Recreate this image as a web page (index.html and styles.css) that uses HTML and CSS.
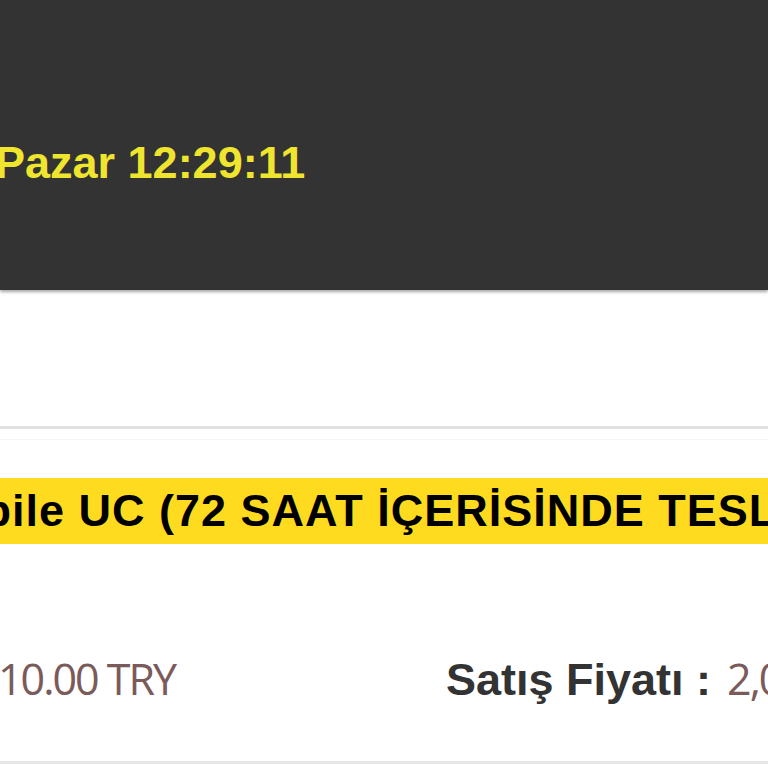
FILE: index.html
```html
<!DOCTYPE html>
<html lang="tr">
<head>
<meta charset="utf-8">
<title>Ürün</title>
<link rel="stylesheet" href="styles.css">
</head>
<body>
<header class="topbar">
  <div class="clock">Pazar 12:29:11</div>
</header>
<main class="content">
  <section class="product">
    <h1 class="product-title"><span class="product-title-text">PUBG Mobile UC (72 SAAT İÇERİSİNDE TESLİM)</span></h1>
    <div class="prices">
      <div class="price-cell price-list"><span class="price-value">10.00 TRY</span></div>
      <div class="price-cell price-sale"><span class="price-label">Satış Fiyatı :</span><span class="price-value price-sale-value">2,010.00 TRY</span></div>
    </div>
  </section>
</main>
</body>
</html>
```
FILE: styles.css
```css
html, body {
  margin: 0;
  padding: 0;
}

body {
  width: 768px;
  height: 768px;
  overflow: hidden;
  background: #fff;
  font-family: "Liberation Sans", Arial, sans-serif;
}

.topbar {
  height: 290px;
  background: #333;
  box-shadow: 0 2px 3px rgba(0, 0, 0, 0.35);
  box-sizing: border-box;
  padding-top: 137px;
  position: relative;
  z-index: 1;
}

.clock {
  margin-left: -5px;
  font-size: 45px;
  line-height: 52px;
  font-weight: bold;
  color: #efe52e;
  white-space: nowrap;
}

.content {
  padding-top: 136px;
}

.product {
  border-top: 3px solid #e1e1e1;
  border-bottom: 3px solid #e6e6e6;
}

.product-title {
  margin: 10px 0 0;
  padding-top: 38px;
  border-top: 1px solid #f6f6f6;
  font-size: 45px;
  font-weight: bold;
  white-space: nowrap;
  overflow: hidden;
}

.product-title-text {
  display: block;
  height: 66px;
  line-height: 66px;
  background: #fedb1f;
  color: #000;
  letter-spacing: 1px;
  text-indent: -231px;
}

.prices {
  display: flex;
  align-items: baseline;
  height: 217px;
  padding-top: 105px;
  box-sizing: border-box;
  white-space: nowrap;
  overflow: hidden;
}

.price-cell {
  line-height: 60px;
}

.price-list {
  width: 448px;
  flex: none;
  margin-left: -2px;
}

.price-label {
  font-size: 45px;
  font-weight: bold;
  color: #333;
}

.price-value {
  font-family: "Open Sans", "Liberation Sans", sans-serif;
  font-size: 43px;
  color: #7a5a5a;
  letter-spacing: -2px;
}

.price-sale-value {
  margin-left: 16px;
}
```
